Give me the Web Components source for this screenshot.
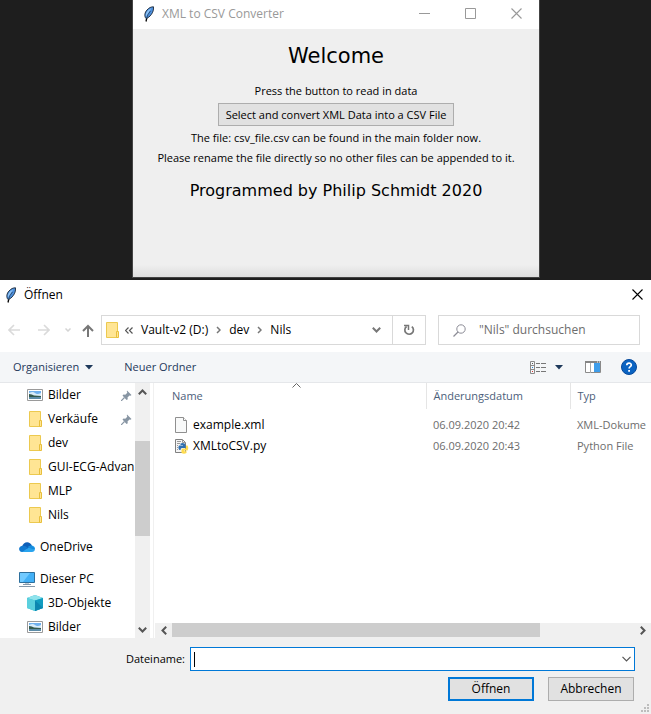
<!DOCTYPE html>
<html lang="de">
<head>
<meta charset="utf-8">
<title>XML to CSV Converter</title>
<style>
html, body { margin: 0; height: 100%; }
body {
  display: flex; flex-direction: column; min-height: 100%;
  background: #1e1e1e; color: #000; overflow: hidden;
  font: 12px/16px "Open Sans", "Noto Sans", sans-serif;
}
</style>
</head>
<body>
<desk-area>
  <tk-window heading="XML to CSV Converter">
    <h1 slot="headline">Welcome</h1>
    <span>Press the button to read in data</span>
    <tk-button>Select and convert XML Data into a CSV File</tk-button>
    <span>The file: csv_file.csv can be found in the main folder now.</span>
    <span>Please rename the file directly so no other files can be appended to it.</span>
    <span slot="credit">Programmed by Philip Schmidt 2020</span>
  </tk-window>
</desk-area>
<file-dialog></file-dialog>

<script>
const FOLDER = `<path d="M2.500.5h11v15h-11z" fill="#ffe594" stroke="#ecc94f"/><path d="M12.500 9.500h2v6h-2z" fill="#ffe594" stroke="#e8bf3c"/>`;
const PICTURE = `<path d="M.5 2.500h15v11H.5z" fill="#fff" stroke="#9a9a9a"/><path d="M2 4h12v8H2z" fill="#6fb0ee"/><path d="M2 6q4-2 6 0t6 0v3H2z" fill="#d8ecfa"/><path d="M2 7q3 0 5 1.500l7 .5v1H2z" fill="#34594c"/><path d="M2 10h12v2H2z" fill="#5c8ca8"/>`;
const ICONS = {
  feather: [16, 16, `<path d="M5 15.500 6 11" stroke="#000" stroke-width="1.300" fill="none"/><path d="M5 12.500C3 10 3.700 6.500 6 4 8 1.700 10 .8 12.500 .8c.3 3-.6 5.500-2.200 7.700C8.900 10.500 7 12 5 12.500z" fill="#4d8fdc" stroke="#1a2634" stroke-width=".9"/><path d="M5 10.500C4.500 8.500 5.300 6.500 7 4.500L10.500 2 7.500 6.500z" fill="#93c6f5"/><path d="M5.500 12.500 7 8.500 9.500 5" stroke="#203850" fill="none" stroke-width=".7"/>`],
  min: [11, 11, `<path d="M0 5.500h11" stroke="#999"/>`],
  max: [11, 11, `<path d="M.5.5h10v10H.5z" fill="none" stroke="#999"/>`],
  close: [11, 11, `<path d="m.5.5 10 10m0-10-10 10" stroke="currentColor" stroke-width="1.100" fill="none"/>`],
  back: [12, 12, `<path d="M12 6H1.500M6 1 1 6l5 5" stroke="#dadada" stroke-width="1.600" fill="none"/>`],
  forward: [12, 12, `<path d="M0 6h10.500M6 1l5 5-5 5" stroke="#dadada" stroke-width="1.600" fill="none"/>`],
  recent: [6, 4, `<path d="m.5.5 2.500 2.500L5.500.5" stroke="#d4d4d4" stroke-width="1.500" fill="none"/>`],
  up: [12, 13, `<path d="M6 13V2M1 7l5-5 5 5" stroke="#777" stroke-width="2" fill="none"/>`],
  folder: [16, 16, FOLDER],
  picture: [16, 16, PICTURE],
  laquo: [8, 7, `<path d="M3.500.5l-3 3 3 3m4-6-3 3 3 3" stroke="#555" stroke-width="1.200" fill="none"/>`],
  crumb: [5, 8, `<path d="m1 1 3 3-3 3" stroke="#777" stroke-width="1.500" fill="none"/>`],
  chevron: [9, 6, `<path d="m.8.8 3.700 3.700L8.200.8" stroke="#777" stroke-width="2" fill="none"/>`],
  thin: [9, 6, `<path d="m.5.800 4 4 4-4" stroke="#555" stroke-width="1.200" fill="none"/>`],
  sort: [9, 5, `<path d="m.5 4.500 4-4 4 4" stroke="#666" fill="none"/>`],
  refresh: [12, 12, `<path d="M8.800 2.600A4.300 4.300 0 1 1 3.600 2.500" stroke="#777" stroke-width="1.700" fill="none"/><path d="M1 1.500h4.500V6" stroke="#777" stroke-width="1.500" fill="none"/>`],
  search: [13, 13, `<circle cx="8" cy="5" r="4.200" stroke="#8c8c96" fill="none"/><path d="M5 8 .5 12.500" stroke="#8c8c96" stroke-width="1.200"/>`],
  drop: [8, 5, `<path d="M0 0h8L4 4.500z" fill="#1e395b"/>`],
  view: [16, 13, `<path d="M.5.5h4v12h-4zM.5 4.500h4m-4 4h4" stroke="#8a8a8a" fill="none"/><path d="M2 2h1v1H2z" fill="#555"/><path d="M2 6h1v1H2z" fill="#1f80d8"/><path d="M2 10h1v1H2z" fill="#d33"/><path d="M6 2.500h4m1 0h5m-10 4h4m1 0h5m-10 4h4m1 0h5" stroke="#777"/>`],
  pane: [16, 12, `<path d="M.5.5h15v11H.5z" fill="#fff" stroke="#8a8a8a"/><path d="M0 0h16v2H0z" fill="#858585"/><path d="M5.500 2v10" stroke="#aaa"/><path d="M9 2h6v9H9z" fill="#3f9de9"/><path d="M12 1h1m1 0h1" stroke="#fff"/>`],
  help: [16, 16, `<circle cx="8" cy="8" r="7.500" fill="#0a63c2" stroke="#06499b"/><path d="M5.800 6.200C5.800 3.600 10.300 3.400 10.300 6 10.300 7.700 8.100 7.500 8.100 9.400" stroke="#fff" stroke-width="1.700" fill="none"/><path d="M7.200 11h1.800v1.800H7.200z" fill="#fff"/>`],
  pin: [11, 11, `<path d="M6 .5 10.500 5l-1 .7-1-.2-2 2 .3 1.800-1.300.7L1.500 5.500l1-1 1.800.3 2-2-.5-1.300z" fill="#8795a3"/><path d="M3.500 7.500 0 11" stroke="#8795a3" stroke-width="1.200"/>`],
  cloud: [16, 16, `<path d="M3 8C4 2.500 11 1.500 13 7l-5 4z" fill="#0d5fb8"/><path d="M3 13C-.5 13-1 8 2.500 7 5 6 7 7.200 8.500 8.500l-3 4.500z" fill="#1179d0"/><path d="M12 6.500c2.800 0 4 1.500 4 3.300C16 12 14.500 13 13 13H3l6.500-4.300z" fill="#2aa4ee"/><path d="M8.500 8.300Q10 6.300 12.500 6.500L16 9.500l-2 .8z" fill="#168bdc"/>`],
  pc: [16, 16, `<path d="M.5 1.500h15v10H.5z" fill="#42b0f6" stroke="#2d6f9c"/><path d="M1 2h10L4 11H1z" fill="#71caff"/><path d="M4 13.500h8M0 15.500h16" stroke="#8498aa"/><path d="M6 12.500h4" stroke="#bcc9d3"/>`],
  cube: [16, 16, `<path d="M8 0 16 3v10L8 16 0 13V3z" fill="#35b8cf"/><path d="M8 0 16 3 8 5.500 0 3z" fill="#8fe3ec"/><path d="M0 3 8 5.500V16L0 13z" fill="#5bd0de"/><path d="M8 5.500 16 3v10L8 16z" fill="#119cc0"/><path d="M8 5.500 12 9l4 4-8 3z" fill="#0d86b0"/>`],
  file: [16, 16, `<path d="M2.500.5h8l3 3v12h-11z" fill="#f8f9f9" stroke="#8f8f8f"/><path d="M10.500.5v3h3" fill="#fff" stroke="#8f8f8f"/>`],
  python: [16, 16, `<path d="M2.500 1.500h7l3 3v10h-10z" fill="#f4f4f4" stroke="#808080"/><path d="M9.500 1.500v3h3M4 3.500h4m-4 2h3m-3 2h1m-1 2h1m-1 2h1" stroke="#9a9a9a" fill="none"/><path d="M7.500 5.500q2-1 4 0 1 .5 1 2v2.500H9q-1.500 0-1.500 2H6.500Q4.500 10 6 7.500h4V7H7.500z" fill="#2f6fb0"/><path d="M13 7.500h1.500q1.500 2.500 0 5H11v.7h2.500V15q-2.500 1.500-5 0v-3q0-1.500 1.500-1.500h3z" fill="#ffdb4d"/>`],
  sup: [9, 6, `<path d="m.8 5.200 3.700-3.700 3.700 3.700" stroke="#555" stroke-width="2" fill="none"/>`],
  sdown: [9, 6, `<path d="m.8.8 3.700 3.700L8.200.8" stroke="#555" stroke-width="2" fill="none"/>`],
  sleft: [6, 9, `<path d="M5.200.8 1.500 4.500l3.700 3.700" stroke="#555" stroke-width="2" fill="none"/>`],
  sright: [6, 9, `<path d="m.8.8 3.700 3.700L.8 8.200" stroke="#555" stroke-width="2" fill="none"/>`],
  grip: [8, 8, `<path d="M6 0h2v2H6zM3 3h2v2H3zM6 3h2v2H6zM0 6h2v2H0zM3 6h2v2H3zM6 6h2v2H6z" fill="#bdbdbd"/>`]
};

const BASE = `*{box-sizing:border-box} button{font:inherit;color:inherit;background:none;border:0;padding:0;margin:0;display:flex;align-items:center;justify-content:center}`;

function define(name, css, html) {
  customElements.define(name, class extends HTMLElement {
    connectedCallback() {
      if (this.shadowRoot) return;
      const root = this.attachShadow({ mode: "open" });
      root.innerHTML = `<style>${BASE}${css}</style>` + (typeof html === "function" ? html(this) : html);
    }
  });
}

define("ui-icon", `:host{display:inline-flex;flex:none} svg{display:block}`, el => {
  const [w, h, body] = ICONS[el.getAttribute("name")];
  return `<svg width="${w}" height="${h}" viewBox="0 0 ${w} ${h}" aria-hidden="true">${body}</svg>`;
});

define("desk-area", `:host{display:block;padding:0 111px 2px 132px;background:#1e1e1e}`, `<slot></slot>`);

define("tk-window", `
:host{display:flex;flex-direction:column;border:1px solid #444;border-top:0;background:#efefef}
header{display:flex;align-items:center;height:29px;padding:0 17px 2px 8px;background:#fff;color:#999}
header span{flex:1;margin-left:5px}
.controls{display:flex;gap:35px}
main{display:flex;flex-direction:column;align-items:center;gap:4px;height:248px;padding-top:12px;font-size:11px;white-space:nowrap;background:linear-gradient(#efefef 95%,#dedede)}
slot{display:contents}
::slotted(h1){margin:0 0 8px;font:21px/30px "DejaVu Sans",sans-serif}
::slotted([slot=credit]){margin-top:9px;font:16px/24px "DejaVu Sans",sans-serif}`,
el => `<header><ui-icon name="feather"></ui-icon><span>${el.getAttribute("heading")}</span>
<div class="controls"><button aria-label="Minimize"><ui-icon name="min"></ui-icon></button><button aria-label="Maximize"><ui-icon name="max"></ui-icon></button><button aria-label="Close"><ui-icon name="close"></ui-icon></button></div></header>
<main><slot name="headline"></slot><slot></slot><slot name="credit"></slot></main>`);

define("tk-button", `:host{display:block} button{height:23px;padding:0 7px;background:#e1e1e1;border:1px solid #adadad;white-space:nowrap}`,
`<button><slot></slot></button>`);

define("path-bar", `
:host{display:flex;align-items:center;padding:6px 11px 7px 8px;height:43px;box-sizing:border-box}
.arrows{display:flex;align-items:center;width:93px}
.arrows button:nth-child(2){margin-left:18px}
.arrows button:nth-child(3){margin-left:15px}
.arrows button:nth-child(4){margin-left:11px}
.path{flex:1;display:flex;height:30px;border:1px solid #d9d9d9}
nav{flex:1;display:flex;align-items:center;padding-left:2px}
nav ui-icon[name=laquo]{margin:0 8px 0 5px}
nav a{color:inherit;text-decoration:none;white-space:nowrap}
nav ui-icon[name=crumb]{margin:0 8px}
.drop{width:32px}
.refresh{width:33px;border-left:1px solid #d9d9d9}
label{display:flex;align-items:center;width:202px;height:30px;margin-left:12px;padding-left:14px;border:1px solid #d9d9d9}
input{flex:1;min-width:0;margin-left:13px;padding:0;border:0;outline:0;font:inherit}
input::placeholder{color:#6d6d6d;opacity:1}`,
`<div class="arrows"><button aria-label="Zurück"><ui-icon name="back"></ui-icon></button><button aria-label="Vorwärts"><ui-icon name="forward"></ui-icon></button><button aria-label="Zuletzt besucht"><ui-icon name="recent"></ui-icon></button><button aria-label="Nach oben"><ui-icon name="up"></ui-icon></button></div>
<div class="path"><nav><ui-icon name="folder"></ui-icon><ui-icon name="laquo"></ui-icon><a href="#">Vault-v2 (D:)</a><ui-icon name="crumb"></ui-icon><a href="#">dev</a><ui-icon name="crumb"></ui-icon><a href="#">Nils</a></nav>
<button class="drop" aria-label="Vorherige Orte"><ui-icon name="chevron"></ui-icon></button><button class="refresh" aria-label="Aktualisieren"><ui-icon name="refresh"></ui-icon></button></div>
<label><ui-icon name="search"></ui-icon><input type="search" aria-label="&quot;Nils&quot; durchsuchen" placeholder="&quot;Nils&quot; durchsuchen"></label>`);

define("command-bar", `
:host{display:flex;align-items:center;height:31px;box-sizing:border-box;padding:0 14px 0 13px;background:#f4f6f8;border-bottom:1px solid #e5e7ea;color:#1e395b;font-size:11px}
.first{gap:6px;margin-right:31px}
.view{gap:9px;margin-left:auto}
.pane{margin:0 20px 0 22px}`,
`<button class="first">Organisieren<ui-icon name="drop"></ui-icon></button><button>Neuer Ordner</button>
<button class="view" aria-label="Ansicht"><ui-icon name="view"></ui-icon><ui-icon name="drop"></ui-icon></button><button class="pane" aria-label="Vorschaufenster"><ui-icon name="pane"></ui-icon></button><button aria-label="Hilfe"><ui-icon name="help"></ui-icon></button>`);

define("tree-item", `
:host{display:block;padding-left:19px}
:host([nested]){padding-left:27px}
:host([spaced]){margin-top:8px}
a{display:flex;align-items:center;height:24px;padding-right:3px;color:inherit;text-decoration:none}
span{flex:1;margin-left:5px;white-space:nowrap}`,
el => `<a href="#"><ui-icon name="${el.getAttribute("icon")}"></ui-icon><span><slot></slot></span>${el.hasAttribute("pinned") ? '<ui-icon name="pin"></ui-icon>' : ""}</a>`);

define("scroll-bar", `
:host{display:flex;background:#f0f0f0}
:host([axis=y]){flex-direction:column;width:15px}
:host([axis=x]){height:15px;border-bottom:1px solid #f0f0f0}
:host([axis=y]) button{height:17px}
:host([axis=x]) button{width:17px}
.track{flex:1;display:flex;flex-direction:inherit}
.thumb{background:#cdcdcd}`,
el => {
  const y = el.getAttribute("axis") === "y";
  const [before, size, after] = el.getAttribute("parts").split(" ");
  return `<button aria-label="${y ? "Nach oben" : "Nach links"}"><ui-icon name="${y ? "sup" : "sleft"}"></ui-icon></button>
<div class="track"><div style="flex:${before}"></div><div class="thumb" style="flex:${size}"></div><div style="flex:${after}"></div></div>
<button aria-label="${y ? "Nach unten" : "Nach rechts"}"><ui-icon name="${y ? "sdown" : "sright"}"></ui-icon></button>`;
});

define("file-list", `
:host{display:flex;flex-direction:column;min-width:0;overflow:hidden;position:relative}
.view{flex:1;overflow:hidden}
table{width:100%;table-layout:fixed;border-collapse:collapse}
th,td{padding:0 0 0 7px;text-align:left;font-weight:400;white-space:nowrap;font-size:11px}
th{height:26px;color:#4c607a;border-right:1px solid #e5e5e5}
th:last-child{border-right:0}
th:first-child{padding-left:17px}
tbody::before{content:"";display:block;height:5px}
td{height:21px;color:#6d6d6d}
td:first-child{padding-left:18px;color:#000;font-size:12px}
.name{display:flex;align-items:center;gap:4px}
.sort{position:absolute;top:0;left:137px}`,
`<div class="view"><table><colgroup><col><col style="width:144px"><col style="width:81px"></colgroup>
<thead><tr><th>Name</th><th>Änderungsdatum</th><th>Typ</th></tr></thead>
<tbody><tr><td><div class="name"><ui-icon name="file"></ui-icon>example.xml</div></td><td>06.09.2020 20:42</td><td>XML-Dokume</td></tr>
<tr><td><div class="name"><ui-icon name="python"></ui-icon>XMLtoCSV.py</div></td><td>06.09.2020 20:43</td><td>Python File</td></tr></tbody></table></div>
<ui-icon class="sort" name="sort"></ui-icon>
<scroll-bar axis="x" parts="0 368 94"></scroll-bar>`);

define("file-name-form", `
:host{display:block;position:relative;background:#f0f0f0;padding:9px 16px 13px}
.row{display:flex;align-items:center;gap:5px}
.row>label{width:169px;text-align:right;font-size:11px}
.combo{flex:1;display:flex;position:relative;height:24px;background:#fff;border:1px solid #0078d7}
input{flex:1;min-width:0;border:0;outline:0;background:none;font:inherit;padding:0 4px}
.combo button{width:16px}
.caret{position:absolute;left:3px;top:4px;width:1px;height:15px;background:#000}
.actions{display:flex;justify-content:flex-end;gap:14px;margin-top:6px;padding-right:1px}
.actions button{width:86px;height:24px;background:#e1e1e1;border:1px solid #adadad}
.actions .default{border:2px solid #0078d7}
.grip{position:absolute;right:2px;bottom:2px}`,
`<div class="row"><label for="n">Dateiname:</label><div class="combo"><input id="n" type="text"><span class="caret"></span><button aria-label="Liste öffnen"><ui-icon name="thin"></ui-icon></button></div></div>
<div class="actions"><button class="default">Öffnen</button><button>Abbrechen</button></div><ui-icon class="grip" name="grip"></ui-icon>`);

define("file-dialog", `
:host{flex:1;display:flex;flex-direction:column;min-height:0;background:#fff}
header{display:flex;align-items:center;justify-content:space-between;height:29px;padding:0 8px 0 3px}
header div{display:flex;align-items:center;gap:5px}
.body{flex:1;min-height:0;display:grid;grid-template-columns:135px auto 5px minmax(0,1fr)}
.tree{overflow:hidden}
.split{border-right:1px solid #f0f0f0;margin-right:1px}`,
`<header><div><ui-icon name="feather"></ui-icon>Öffnen</div><button aria-label="Schließen"><ui-icon name="close"></ui-icon></button></header>
<path-bar></path-bar><command-bar></command-bar>
<div class="body"><div class="tree">
<tree-item nested pinned icon="picture">Bilder</tree-item>
<tree-item nested pinned icon="folder">Verkäufe</tree-item>
<tree-item nested icon="folder">dev</tree-item>
<tree-item nested icon="folder">GUI-ECG-Advan</tree-item>
<tree-item nested icon="folder">MLP</tree-item>
<tree-item nested icon="folder">Nils</tree-item>
<tree-item spaced icon="cloud">OneDrive</tree-item>
<tree-item spaced icon="pc">Dieser PC</tree-item>
<tree-item nested icon="cube">3D-Objekte</tree-item>
<tree-item nested icon="picture">Bilder</tree-item>
</div><scroll-bar axis="y" parts="41 95 85"></scroll-bar><div class="split"></div><file-list></file-list></div>
<file-name-form></file-name-form>`);
</script>
</body>
</html>
